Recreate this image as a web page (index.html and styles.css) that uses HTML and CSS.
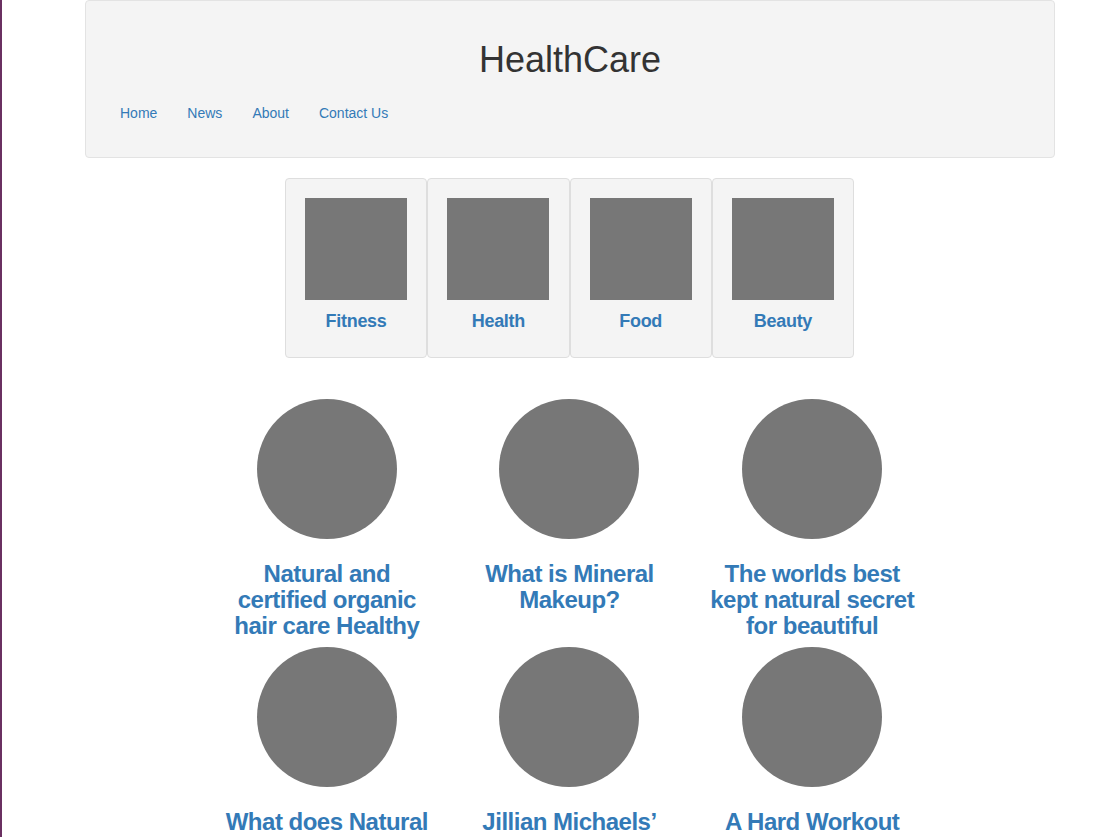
FILE: index.html
```html
<!DOCTYPE html>
<html lang="en">
<head>
<meta charset="utf-8">
<title>HealthCare</title>
<link rel="stylesheet" href="styles.css">
</head>
<body>
<div class="page">
  <header class="masthead">
    <h1 class="brand">HealthCare</h1>
    <nav>
      <ul class="nav">
        <li><a href="#">Home</a></li>
        <li><a href="#">News</a></li>
        <li><a href="#">About</a></li>
        <li><a href="#">Contact Us</a></li>
      </ul>
    </nav>
  </header>

  <section class="categories">
    <a class="cat" href="#"><span class="thumb"></span><span class="cat-label">Fitness</span></a>
    <a class="cat" href="#"><span class="thumb"></span><span class="cat-label">Health</span></a>
    <a class="cat" href="#"><span class="thumb"></span><span class="cat-label">Food</span></a>
    <a class="cat" href="#"><span class="thumb"></span><span class="cat-label">Beauty</span></a>
  </section>

  <section class="articles">
    <article class="post"><span class="disc"></span><h3><a href="#">Natural and certified organic hair care Healthy</a></h3></article>
    <article class="post"><span class="disc"></span><h3><a href="#">What is Mineral Makeup?</a></h3></article>
    <article class="post"><span class="disc"></span><h3><a href="#">The worlds best kept natural secret for beautiful</a></h3></article>
    <article class="post"><span class="disc"></span><h3><a href="#">What does Natural Beauty Mean?</a></h3></article>
    <article class="post"><span class="disc"></span><h3><a href="#">Jillian Michaels’ Workout Secrets</a></h3></article>
    <article class="post"><span class="disc"></span><h3><a href="#">A Hard Workout Routine</a></h3></article>
  </section>
</div>
</body>
</html>
```

FILE: styles.css
```css
html, body {
  margin: 0;
  padding: 0;
}

body {
  background: #fff;
  border-left: 2px solid #6a3061;
  min-height: 837px;
  box-sizing: border-box;
  font-family: "Liberation Sans", Arial, sans-serif;
  font-size: 14px;
  line-height: 20px;
  color: #333;
}

a {
  color: #337ab7;
  text-decoration: none;
}

.page {
  width: 970px;
  margin-left: 83px;
}

.masthead {
  background: #f4f4f4;
  border: 1px solid #e3e3e3;
  border-radius: 4px;
  padding: 39px 19px 24px;
}

.brand {
  margin: 0;
  text-align: center;
  font-size: 36px;
  font-weight: normal;
  line-height: 40px;
  color: #333;
}

.nav {
  list-style: none;
  margin: 13px 0 0;
  padding: 0;
  display: flex;
}

.nav a {
  display: block;
  padding: 10px 15px;
  line-height: 20px;
}

.categories {
  display: flex;
  justify-content: center;
  margin-top: 20px;
  padding-right: 1px;
}

.cat {
  width: 142.3px;
  box-sizing: border-box;
  background: #f4f4f4;
  border: 1px solid #dedede;
  border-radius: 4px;
  padding: 19px 19px 26px;
  display: flex;
  flex-direction: column;
  align-items: center;
}

.thumb {
  width: 102px;
  height: 102px;
  background: #777;
}

.cat-label {
  margin-top: 11px;
  font-size: 18px;
  line-height: 20px;
  font-weight: bold;
  letter-spacing: -0.3px;
}

.articles {
  width: 728px;
  margin: 41px auto 0;
  padding-right: 1px;
  display: grid;
  grid-template-columns: repeat(3, 1fr);
}

.post {
  padding: 0 15px;
  display: flex;
  flex-direction: column;
  align-items: center;
  text-align: center;
}

.disc {
  width: 140px;
  height: 140px;
  border-radius: 50%;
  background: #777;
}

.post h3 {
  margin: 22px 0 8px;
  font-size: 24px;
  line-height: 26px;
  font-weight: bold;
  letter-spacing: -0.5px;
}
```
